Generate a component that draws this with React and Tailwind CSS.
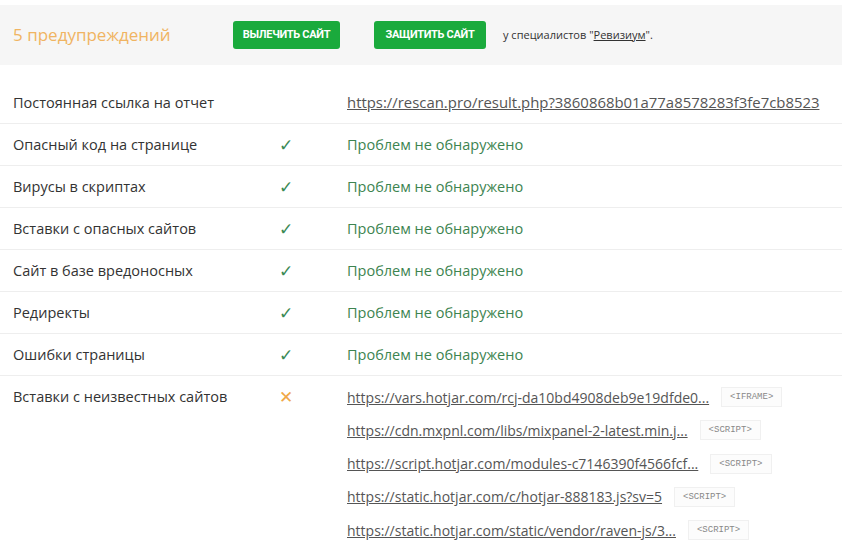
export default function App() {
  const checks = [
    "Опасный код на странице",
    "Вирусы в скриптах",
    "Вставки с опасных сайтов",
    "Сайт в базе вредоносных",
    "Редиректы",
    "Ошибки страницы",
  ];
  const links = [
    ["https://vars.hotjar.com/rcj-da10bd4908deb9e19dfde0...", "<IFRAME>"],
    ["https://cdn.mxpnl.com/libs/mixpanel-2-latest.min.j...", "<SCRIPT>"],
    ["https://script.hotjar.com/modules-c7146390f4566fcf...", "<SCRIPT>"],
    ["https://static.hotjar.com/c/hotjar-888183.js?sv=5", "<SCRIPT>"],
    ["https://static.hotjar.com/static/vendor/raven-js/3...", "<SCRIPT>"],
  ];

  return (
    <div className="w-[842px] h-[556px] bg-white overflow-hidden text-[#333] font-['Open_Sans',sans-serif]">
      {/* header */}
      <div className="mt-[5px] h-[60px] bg-[#f6f6f6] flex items-center pl-[13px]">
        <div className="w-[220px] text-[17px] text-[#f0b462]">5 предупреждений</div>
        <button className="h-[28px] w-[107px] rounded-[3px] bg-[#1aaa3c] text-white text-[11px] font-bold tracking-[-0.3px] font-['Roboto',sans-serif]">
          ВЫЛЕЧИТЬ САЙТ
        </button>
        <button className="ml-[34px] h-[28px] w-[112px] rounded-[3px] bg-[#1aaa3c] text-white text-[11px] font-bold tracking-[-0.3px] font-['Roboto',sans-serif]">
          ЗАЩИТИТЬ САЙТ
        </button>
        <div className="ml-[17px] text-[11px] text-[#333]">
          у специалистов "<span className="underline">Ревизиум</span>".
        </div>
      </div>

      {/* rows */}
      <div className="mt-[17px] text-[14.5px]">
        <div className="flex items-center h-[42px] border-b border-[#eeeeee]">
          <div className="w-[347px] pl-[13px]">Постоянная ссылка на отчет</div>
          <div className="text-[#555] underline text-[14.9px]">https://rescan.pro/result.php?3860868b01a77a8578283f3fe7cb8523</div>
        </div>
        {checks.map((c) => (
          <div key={c} className="flex items-center h-[42px] border-b border-[#eeeeee]">
            <div className="w-[279px] pl-[13px]">{c}</div>
            <div className="w-[68px] text-[#3a8a55] text-[17px]">✓</div>
            <div className="text-[#3d8450]">Проблем не обнаружено</div>
          </div>
        ))}
        <div className="flex items-start pt-[10px]">
          <div className="w-[279px] pl-[13px] leading-[22px]">Вставки с неизвестных сайтов</div>
          <div className="w-[68px] text-[#f0a848] text-[17px] leading-[22px]">✕</div>
          <div className="flex flex-col gap-[11.3px]">
            {links.map(([u, t]) => (
              <div key={u} className="flex items-center h-[22px]">
                <span className="text-[#555] underline text-[14px]">{u}</span>
                <span className="ml-[12px] px-[8px] py-[3px] border border-[#f0f0f0] bg-[#fcfcfc] text-[#888] text-[9px] leading-[12px] font-['Liberation_Mono',monospace]">
                  {t}
                </span>
              </div>
            ))}
          </div>
        </div>
      </div>
    </div>
  );
}
